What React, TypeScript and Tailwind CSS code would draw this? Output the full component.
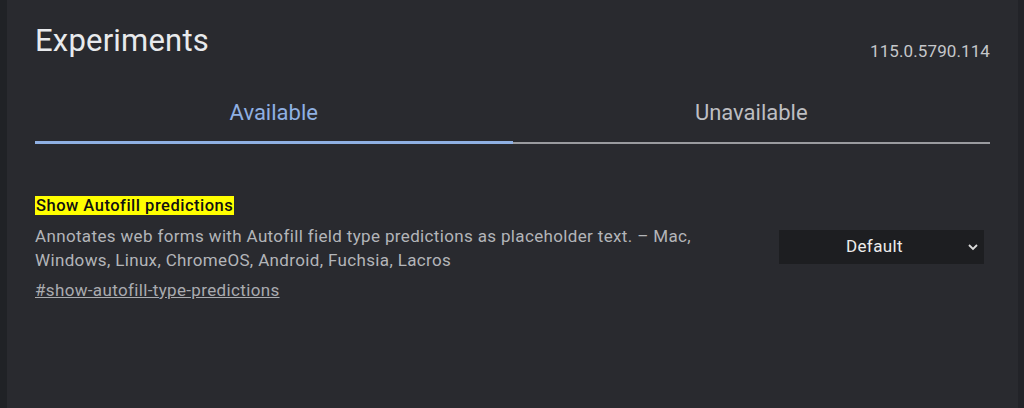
import React from "react";

export default function App() {
  return (
    <div className="w-[1024px] h-[408px] flex bg-[#292a2f] overflow-hidden" style={{ fontFamily: "Roboto, 'Liberation Sans', sans-serif" }}>
      <div className="w-[7px] h-full bg-[#202226]" />
      <div className="flex-1 flex flex-col pl-[28px] pr-[28px]">
        <div className="flex justify-between items-start pt-[24px]">
          <h1 className="text-[31px] leading-[34px] text-[#e8eaed] tracking-[0.2px]">Experiments</h1>
          <span className="text-[17px] leading-[20px] text-[#c5c7ca] mt-[17px] tracking-[0.1px]">115.0.5790.114</span>
        </div>
        <div className="flex mt-[39px]">
          <div className="flex-1 flex flex-col items-center">
            <span className="text-[22px] leading-[26px] text-[#8fb0e3] pb-[15px]">Available</span>
            <div className="w-full h-[3px] bg-[#8fb0e3]" />
          </div>
          <div className="flex-1 flex flex-col items-center">
            <span className="text-[22px] leading-[26px] text-[#bdbec2] pb-[15px]">Unavailable</span>
            <div className="w-full h-[3px] flex items-center"><div className="w-full h-[2px] bg-[#9a9b9f]" /></div>
          </div>
        </div>
        <div className="flex justify-between items-start mt-[52px]">
          <div className="flex flex-col">
            <div className="leading-[20px]">
              <span className="bg-[#ffff00] text-[#111] text-[16.5px] leading-[20px] font-medium tracking-[0.5px] px-[1px]">Show Autofill predictions</span>
            </div>
            <p className="text-[17px] leading-[24px] text-[#b3b5b9] tracking-[0.35px] mt-[8px] w-[690px]">
              Annotates web forms with Autofill field type predictions as placeholder text. – Mac, Windows, Linux, ChromeOS, Android, Fuchsia, Lacros
            </p>
            <a className="block text-[17px] leading-[24px] text-[#a9abaf] tracking-[0.35px] underline mt-[6px]">#show-autofill-type-predictions</a>
          </div>
          <div className="w-[205px] h-[34px] mt-[34px] mr-[6px] bg-[#1d1e21] flex items-center relative">
            <span className="flex-1 text-center text-[17px] text-[#ececec] pl-[4px] tracking-[0.4px]">Default</span>
            <svg width="14" height="14" viewBox="0 0 14 14" className="mr-[4px]">
              <path d="M3 5 L7 9 L11 5" stroke="#dcdcdc" strokeWidth="1.8" fill="none" />
            </svg>
          </div>
        </div>
      </div>
      <div className="w-[6px] h-full bg-[#222328]" />
    </div>
  );
}
